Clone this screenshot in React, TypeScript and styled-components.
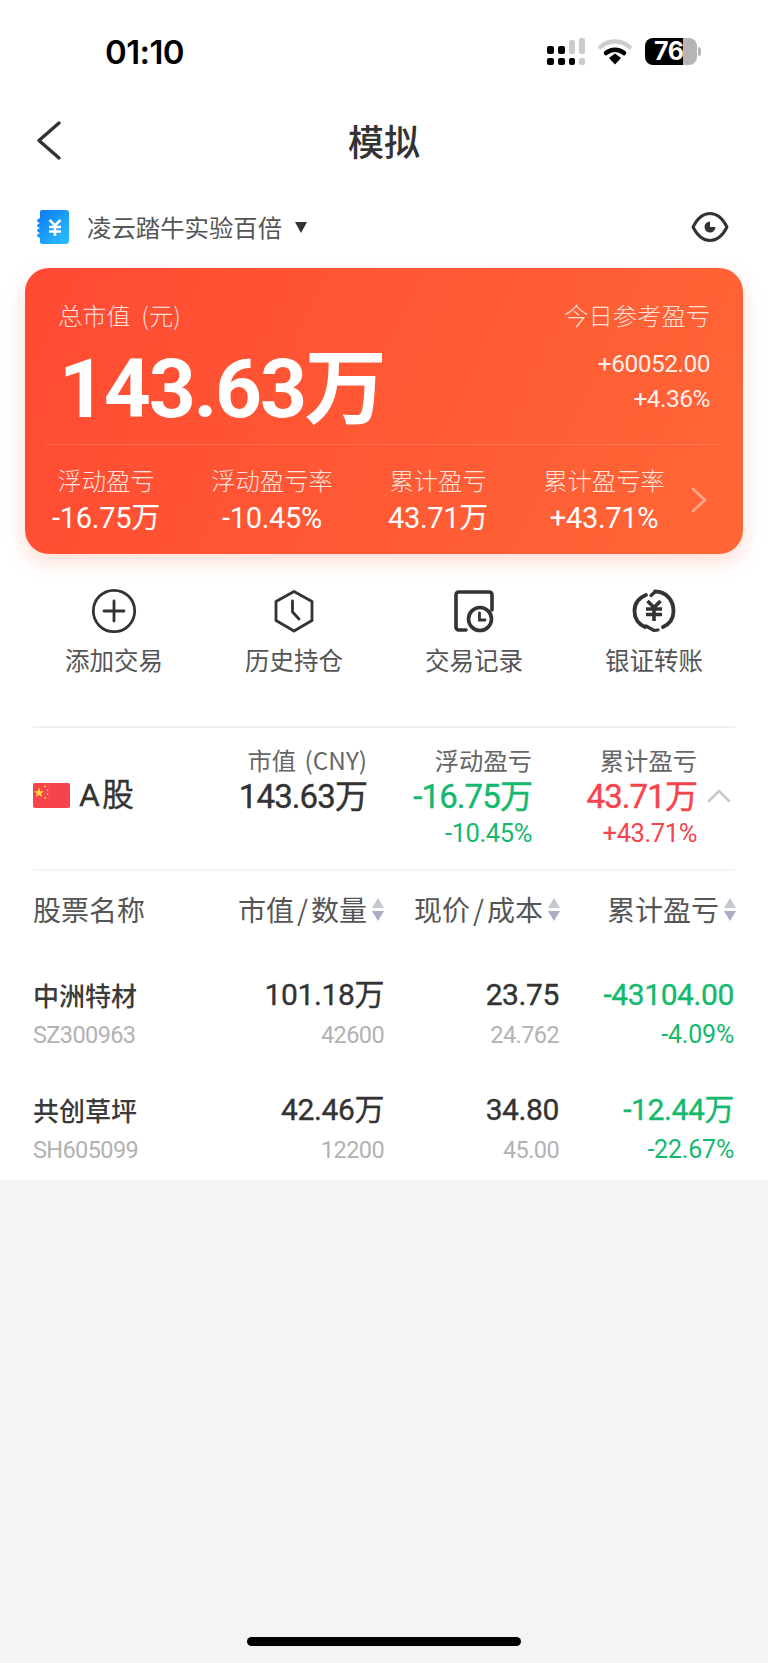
import React, { FC } from 'react';
import styled, { createGlobalStyle } from 'styled-components';

const CJK = '"Noto Sans CJK SC", sans-serif';
const NUM = 'Roboto, "Noto Sans CJK SC", sans-serif';
const GREEN = '#14b96e';
const RED = '#f7434b';

const Global = createGlobalStyle`
    html, body { margin: 0; padding: 0; background: #f4f4f4; }
    * { box-sizing: border-box; }
`;

const Page = styled.div`
    width: 768px;
    height: 1663px;
    display: flex;
    flex-direction: column;
    background: #f4f4f4;
    font-family: ${CJK};
    overflow: hidden;
`;

const Sheet = styled.div`
    height: 1180px;
    background: #fff;
`;

const StatusBar = styled.div`
    height: 104px;
    padding: 34px 71px 0 105px;
    display: flex;
    justify-content: space-between;
    align-items: flex-start;
`;

const Time = styled.div`
    font: 600 33px/36px Inter, sans-serif;
    letter-spacing: -0.6px;
    color: #000;
`;

const StatusIcons = styled.div`
    display: flex;
    align-items: flex-start;
    margin-top: 4px;
    gap: 13px;
`;

const Battery = styled.div`
    width: 52px;
    height: 27px;
    border-radius: 8px;
    background: linear-gradient(90deg, #000 0 38px, #b5b5b5 38px);
    color: #fff;
    font: 700 25px/27px Inter, sans-serif;
    letter-spacing: -0.5px;
    padding-left: 9px;
    position: relative;
    &::after {
        content: '';
        position: absolute;
        right: -4px;
        top: 9px;
        width: 3px;
        height: 9px;
        border-radius: 0 3px 3px 0;
        background: #b5b5b5;
    }
`;

const NavBar = styled.div`
    height: 72px;
    padding-left: 36px;
    display: grid;
    grid-template-columns: 1fr auto 1fr;
    align-items: center;
`;

const Title = styled.h1`
    margin: 0 36px 0 0;
    font: 500 36px/48px ${CJK};
    color: #333;
`;

const AccountRow = styled.div`
    height: 92px;
    padding: 10px 39px 0 37px;
    display: flex;
    align-items: center;
`;

const AccountName = styled.span`
    margin: 0 13px 0 18px;
    font: 400 24.4px/34px ${CJK};
    color: #555;
`;

const Caret = styled.span`
    width: 0;
    height: 0;
    border-left: 6.5px solid transparent;
    border-right: 6.5px solid transparent;
    border-top: 11px solid #333;
    margin-right: auto;
`;

const Card = styled.section`
    height: 286px;
    margin: 0 25px;
    border-radius: 24px;
    background: linear-gradient(115deg, #ff4a33 0%, #ff6736 100%);
    box-shadow: 0 8px 20px rgba(255, 90, 50, 0.22);
    color: #fff;
`;

const CardTop = styled.div`
    height: 177px;
    margin: 0 21px;
    padding: 29px 12px 0;
    border-bottom: 1px solid rgba(255, 255, 255, 0.13);
    display: grid;
    grid-template-columns: 1fr auto;
    grid-template-rows: 36px auto;
`;

const CardLabel = styled.div`
    font: 300 24.3px/36px ${CJK};
    color: rgba(255, 255, 255, 0.82);
    word-spacing: 5px;
`;

const BigValue = styled.div`
    margin: 8px 0 0 1px;
    font: 700 82px/96px Roboto, ${CJK};
    letter-spacing: -2.2px;
    white-space: nowrap;
    color: #fff;
`;

const TodayValue = styled.div`
    margin-top: 13px;
    text-align: right;
    font: 400 24.5px/35px ${NUM};
    letter-spacing: -0.5px;
    color: rgba(255, 255, 255, 0.92);
`;

const Stats = styled.div`
    height: 109px;
    margin-left: -2px;
    padding-top: 18px;
    display: grid;
    grid-template-columns: repeat(4, 166px) 1fr;
`;

const Stat = styled.div`
    text-align: center;
`;

const StatLabel = styled.div`
    font: 300 24.3px/34px ${CJK};
    color: rgba(255, 255, 255, 0.85);
`;

const StatValue = styled.div`
    margin-top: 4px;
    font: 400 29px/34px ${NUM};
    letter-spacing: -0.3px;
    white-space: nowrap;
`;

const StatArrow = styled.div`
    padding-top: 24px;
    margin-left: 4px;
`;

const Actions = styled.nav`
    height: 172px;
    padding: 34px 24px 0;
    display: grid;
    grid-template-columns: repeat(4, 180px);
`;

const Action = styled.div`
    display: flex;
    flex-direction: column;
    align-items: center;
    gap: 8px;
`;

const ActionLabel = styled.span`
    font: 400 24.5px/36px ${CJK};
    color: #555;
`;

const Holdings = styled.div`
    margin: 0 33px;
`;

const Summary = styled.div`
    height: 145px;
    border-top: 2px solid #f1f1f1;
    border-bottom: 2px solid #f4f4f4;
    padding-top: 15px;
    display: grid;
    grid-template-columns: 170px 164px 165px 165px 38px;
`;

const Market = styled.div`
    display: flex;
    align-items: center;
    height: 104px;
    gap: 9px;
`;

const MarketName = styled.span`
    font: 400 32px/40px ${NUM};
    letter-spacing: 2px;
    color: #333;
    -webkit-text-stroke: 0.3px #333;
`;

const SummaryCol = styled.div`
    text-align: right;
`;

const SummaryLabel = styled.div`
    font: 400 24.3px/34px ${CJK};
    color: #666;
    word-spacing: 3px;
    white-space: nowrap;
`;

const SummaryValue = styled.div<{ $color?: string }>`
    margin-top: 1px;
    font: 400 33px/38px ${NUM};
    letter-spacing: -0.9px;
    color: ${(p) => p.$color || '#333'};
    -webkit-text-stroke: 0.4px ${(p) => p.$color || '#333'};
    white-space: nowrap;
`;

const SummarySub = styled.div<{ $color: string }>`
    margin-top: 2px;
    font: 400 25.5px/30px ${NUM};
    letter-spacing: -0.4px;
    color: ${(p) => p.$color};
`;

const Collapse = styled.div`
    padding: 41px 0 0 10px;
`;

const HeaderRow = styled.div`
    height: 104px;
    padding-top: 18px;
    display: grid;
    grid-template-columns: 150px 200px 176px 176px;
    align-items: start;
`;

const HeaderCell = styled.div`
    display: flex;
    justify-content: flex-end;
    align-items: center;
    gap: 5px;
    font: 400 28px/40px ${CJK};
    color: #555;
    white-space: nowrap;
    &:first-child { justify-content: flex-start; }
`;

const Slash = styled.span`
    margin: 0 3px;
`;

const Sort = styled.span`
    display: flex;
    flex-direction: column;
    gap: 3px;
    margin-right: -1px;
    &::before, &::after {
        content: '';
        width: 0;
        height: 0;
        border-left: 6.5px solid transparent;
        border-right: 6.5px solid transparent;
    }
    &::before { border-bottom: 10px solid #c3c7d4; }
    &::after { border-top: 10px solid #a9aec0; }
`;

const Rows = styled.div`
    display: flex;
    flex-direction: column;
    gap: 35px;
`;

const Row = styled.div`
    display: grid;
    grid-template-columns: 151px 200px 175px 175px;
`;

const Cell = styled.div`
    text-align: right;
    white-space: nowrap;
`;

const StockName = styled.div`
    font: 500 26px/40px ${CJK};
    color: #3a3a3a;
    text-align: left;
`;

const Main = styled.div<{ $color?: string }>`
    font: 400 30px/40px ${NUM};
    letter-spacing: -0.4px;
    color: ${(p) => p.$color || '#333'};
    -webkit-text-stroke: 0.35px ${(p) => p.$color || '#333'};
`;

const Sub = styled.div<{ $left?: boolean }>`
    font: 400 23.5px/40px ${NUM};
    letter-spacing: -0.6px;
    color: #b2b2b2;
    text-align: ${(p) => (p.$left ? 'left' : 'right')};
`;

const Rate = styled.div`
    font: 400 25px/40px ${NUM};
    letter-spacing: -0.2px;
    color: ${GREEN};
`;

const HomeIndicator = styled.div`
    width: 274px;
    height: 9px;
    margin: auto auto 17px;
    border-radius: 5px;
    background: #000;
`;

const Signal: FC = () => (
    <svg width="38" height="27" viewBox="0 0 38 27">
        <rect x="0" y="8" width="7" height="8" rx="2" fill="#000" />
        <rect x="11" y="8" width="7" height="8" rx="2" fill="#000" />
        <rect x="22" y="2" width="6" height="14" rx="2" fill="#ccc" />
        <rect x="32" y="0" width="6" height="16" rx="2" fill="#ccc" />
        <rect x="0" y="20" width="7" height="7" rx="2" fill="#000" />
        <rect x="11" y="20" width="7" height="7" rx="2" fill="#000" />
        <rect x="22" y="20" width="6" height="7" rx="2" fill="#000" />
        <rect x="32" y="20" width="6" height="7" rx="2" fill="#ccc" />
    </svg>
);

const Wifi: FC = () => (
    <svg width="34" height="27" viewBox="0 0 34 27">
        <path d="M2.500 9 C10 1.500 24 1.500 31.500 9" fill="none" stroke="#ccc" strokeWidth="4.500" strokeLinecap="round" />
        <path d="M8 15 C13 10.500 21 10.500 26 15" fill="none" stroke="#000" strokeWidth="4.500" strokeLinecap="round" />
        <path d="M11 20 L17 15.500 L23 20 L17 26.500 Z" fill="#000" />
    </svg>
);

const Back: FC = () => (
    <svg width="26" height="40" viewBox="0 0 26 40">
        <path d="M23 3 L3 20.500 L23 38" fill="none" stroke="#333" strokeWidth="3.400" strokeLinecap="round" strokeLinejoin="round" />
    </svg>
);

const AccountLogo: FC = () => (
    <svg width="32" height="34" viewBox="0 0 32 34">
        <defs>
            <linearGradient id="logo" x1="0" y1="0" x2="1" y2="1">
                <stop offset="0" stopColor="#0a78f5" />
                <stop offset="1" stopColor="#2cc0ff" />
            </linearGradient>
        </defs>
        <path
            d="M3 2 Q3 0 5 0 H29 Q32 0 32 3 V31 Q32 34 29 34 H5 Q3 34 3 32 V28 Q0 27 0 25.500 Q0 24 3 23 Q0 22 0 20.500 Q0 19 3 18 Q0 17 0 15.500 Q0 14 3 13 Q0 12 0 10.500 Q0 9 3 8 Z"
            fill="url(#logo)"
        />
        <path d="M12.500 10 L18 15.500 L23.500 10 M12 17 H24 M12 21.500 H24 M18 15.500 V26" fill="none" stroke="#fff" strokeWidth="2.600" />
    </svg>
);

const Eye: FC = () => (
    <svg width="38" height="32" viewBox="0 0 38 32">
        <path d="M2 16 C7 6 13 2.500 19 2.500 C25 2.500 31 6 36 16 C31 26 25 29.500 19 29.500 C13 29.500 7 26 2 16 Z" fill="none" stroke="#333" strokeWidth="3" strokeLinejoin="round" />
        <path d="M19 10.500 A5.500 5.500 0 1 0 24.500 16 L19 16 Z" fill="#333" />
    </svg>
);

const StatChevron: FC = () => (
    <svg width="16" height="26" viewBox="0 0 16 26">
        <path d="M2 2 L14 13 L2 24" fill="none" stroke="rgba(255,255,255,0.42)" strokeWidth="2.600" strokeLinecap="round" strokeLinejoin="round" />
    </svg>
);

const PlusIcon: FC = () => (
    <svg width="46" height="46" viewBox="0 0 46 46">
        <circle cx="23" cy="23" r="20.700" fill="none" stroke="#333" strokeWidth="2.800" />
        <path d="M13 23 H33 M23 13 V33" fill="none" stroke="#333" strokeWidth="2.800" strokeLinecap="round" />
    </svg>
);

const HistoryIcon: FC = () => (
    <svg width="46" height="46" viewBox="0 0 46 46">
        <path d="M23 3.500 L41 13.500 V32.500 L23 43 L5 32.500 V13.500 Z" fill="none" stroke="#333" strokeWidth="2.800" strokeLinejoin="round" />
        <path d="M21.500 13 V24 L28 31" fill="none" stroke="#333" strokeWidth="2.800" strokeLinecap="round" strokeLinejoin="round" />
    </svg>
);

const RecordIcon: FC = () => (
    <svg width="46" height="46" viewBox="0 0 46 46">
        <path d="M15 42 H8 Q5 42 5 39 V7 Q5 4 8 4 H38 Q41 4 41 7 V22" fill="none" stroke="#333" strokeWidth="3.600" strokeLinecap="round" />
        <circle cx="29" cy="31" r="11.500" fill="none" stroke="#333" strokeWidth="3.600" />
        <path d="M28.500 25 V32 H34" fill="none" stroke="#333" strokeWidth="2.800" strokeLinecap="round" />
    </svg>
);

const TransferIcon: FC = () => (
    <svg width="46" height="46" viewBox="0 0 46 46">
        <path d="M15 7 C7.500 10 3.500 16 3.500 23 C3.500 30 7.500 36 14 39" fill="none" stroke="#333" strokeWidth="3.800" strokeLinecap="round" />
        <path d="M24 3.500 C35 3.500 42.500 12 42.500 23 C42.500 30 38.500 36 32 39" fill="none" stroke="#333" strokeWidth="3.800" strokeLinecap="round" />
        <path d="M24.500 3.500 L20 7.500 M15 38 L23 42.500 L27 42" fill="none" stroke="#333" strokeWidth="3.200" strokeLinecap="round" strokeLinejoin="round" />
        <path d="M16.500 13 L23 19.500 L29.500 13 M15 21 H31 M15 26.500 H31 M23 19.500 V33" fill="none" stroke="#333" strokeWidth="3.600" />
    </svg>
);

const Flag: FC = () => (
    <svg width="37" height="25" viewBox="0 0 37 25">
        <rect width="37" height="25" rx="2" fill="#f7434b" />
        <path d="M6 4.500 L7.300 8.200 L11 8.200 L8 10.500 L9.200 14 L6 11.900 L2.900 14 L4 10.500 L1 8.200 L4.700 8.200 Z" fill="#ffd93b" />
        <circle cx="12" cy="3.500" r="0.900" fill="#ffd93b" />
        <circle cx="14.500" cy="7" r="0.900" fill="#ffd93b" />
        <circle cx="14.500" cy="11" r="0.900" fill="#ffd93b" />
        <circle cx="12" cy="15" r="0.900" fill="#ffd93b" />
    </svg>
);

const ChevronUp: FC = () => (
    <svg width="24" height="14" viewBox="0 0 24 14">
        <path d="M2 12 L12 2 L22 12" fill="none" stroke="#c9c9c9" strokeWidth="2.600" strokeLinecap="round" strokeLinejoin="round" />
    </svg>
);

const stats = [
    { label: '浮动盈亏', value: '-16.75万' },
    { label: '浮动盈亏率', value: '-10.45%' },
    { label: '累计盈亏', value: '43.71万' },
    { label: '累计盈亏率', value: '+43.71%' },
];

const actions = [
    { label: '添加交易', icon: <PlusIcon /> },
    { label: '历史持仓', icon: <HistoryIcon /> },
    { label: '交易记录', icon: <RecordIcon /> },
    { label: '银证转账', icon: <TransferIcon /> },
];

const stocks = [
    { name: '中洲特材', code: 'SZ300963', value: '101.18万', qty: '42600', price: '23.75', cost: '24.762', pnl: '-43104.00', rate: '-4.09%' },
    { name: '共创草坪', code: 'SH605099', value: '42.46万', qty: '12200', price: '34.80', cost: '45.00', pnl: '-12.44万', rate: '-22.67%' },
];

const App: FC = () => (
    <Page>
        <Global />
        <Sheet>
            <StatusBar>
                <Time>01:10</Time>
                <StatusIcons>
                    <Signal />
                    <Wifi />
                    <Battery>76</Battery>
                </StatusIcons>
            </StatusBar>
            <NavBar>
                <Back />
                <Title>模拟</Title>
            </NavBar>
            <AccountRow>
                <AccountLogo />
                <AccountName>凌云踏牛实验百倍</AccountName>
                <Caret />
                <Eye />
            </AccountRow>
            <Card>
                <CardTop>
                    <CardLabel>总市值 (元)</CardLabel>
                    <CardLabel>今日参考盈亏</CardLabel>
                    <BigValue>143.63万</BigValue>
                    <TodayValue>
                        +60052.00
                        <br />
                        +4.36%
                    </TodayValue>
                </CardTop>
                <Stats>
                    {stats.map((s) => (
                        <Stat key={s.label}>
                            <StatLabel>{s.label}</StatLabel>
                            <StatValue>{s.value}</StatValue>
                        </Stat>
                    ))}
                    <StatArrow>
                        <StatChevron />
                    </StatArrow>
                </Stats>
            </Card>
            <Actions>
                {actions.map((a) => (
                    <Action key={a.label}>
                        {a.icon}
                        <ActionLabel>{a.label}</ActionLabel>
                    </Action>
                ))}
            </Actions>
            <Holdings>
                <Summary>
                    <Market>
                        <Flag />
                        <MarketName>A股</MarketName>
                    </Market>
                    <SummaryCol>
                        <SummaryLabel>市值 (CNY)</SummaryLabel>
                        <SummaryValue>143.63万</SummaryValue>
                    </SummaryCol>
                    <SummaryCol>
                        <SummaryLabel>浮动盈亏</SummaryLabel>
                        <SummaryValue $color={GREEN}>-16.75万</SummaryValue>
                        <SummarySub $color={GREEN}>-10.45%</SummarySub>
                    </SummaryCol>
                    <SummaryCol>
                        <SummaryLabel>累计盈亏</SummaryLabel>
                        <SummaryValue $color={RED}>43.71万</SummaryValue>
                        <SummarySub $color={RED}>+43.71%</SummarySub>
                    </SummaryCol>
                    <Collapse>
                        <ChevronUp />
                    </Collapse>
                </Summary>
                <HeaderRow>
                    <HeaderCell>股票名称</HeaderCell>
                    <HeaderCell><span>市值<Slash>/</Slash>数量</span><Sort /></HeaderCell>
                    <HeaderCell><span>现价<Slash>/</Slash>成本</span><Sort /></HeaderCell>
                    <HeaderCell><span>累计盈亏</span><Sort /></HeaderCell>
                </HeaderRow>
                <Rows>
                    {stocks.map((s) => (
                        <Row key={s.code}>
                            <Cell>
                                <StockName>{s.name}</StockName>
                                <Sub $left>{s.code}</Sub>
                            </Cell>
                            <Cell>
                                <Main>{s.value}</Main>
                                <Sub>{s.qty}</Sub>
                            </Cell>
                            <Cell>
                                <Main>{s.price}</Main>
                                <Sub>{s.cost}</Sub>
                            </Cell>
                            <Cell>
                                <Main $color={GREEN}>{s.pnl}</Main>
                                <Rate>{s.rate}</Rate>
                            </Cell>
                        </Row>
                    ))}
                </Rows>
            </Holdings>
        </Sheet>
        <HomeIndicator />
    </Page>
);

export default App;
